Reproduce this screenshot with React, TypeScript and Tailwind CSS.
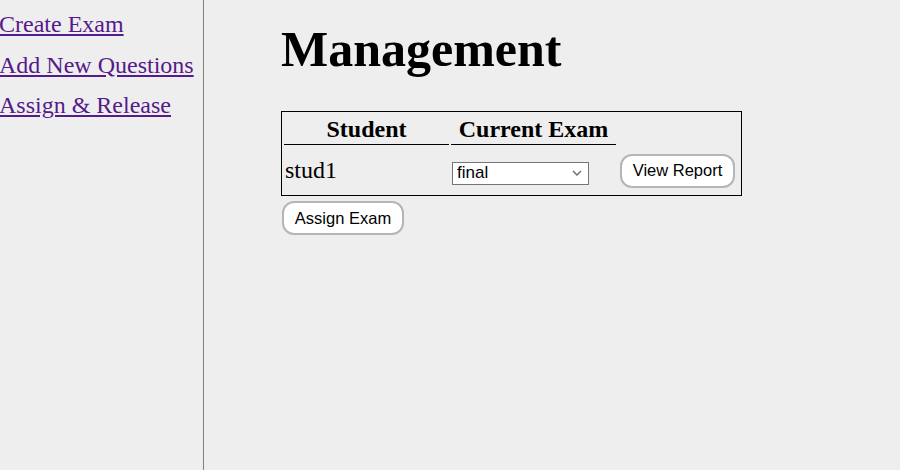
import React from "react";

export default function App() {
  const serif = { fontFamily: '"Liberation Serif", "Times New Roman", serif' };
  const sans = { fontFamily: '"Liberation Sans", Arial, sans-serif' };
  return (
    <div className="flex h-[470px] w-[900px] bg-[#eeeeee] text-black overflow-hidden" style={serif}>
      <nav className="w-[204px] h-full border-r border-[#808080] flex flex-col pt-[4px] text-[24px] leading-[40.5px] shrink-0">
        <a href="#" className="text-[#551a8b] underline block -ml-[1px]">Create Exam</a>
        <a href="#" className="text-[#551a8b] underline block -ml-[1px]">Add New Questions</a>
        <a href="#" className="text-[#551a8b] underline block -ml-[1px]">Assign &amp; Release</a>
      </nav>
      <main className="pl-[77px] flex flex-col items-start">
        <h1 className="text-[50px] font-bold leading-[55px] mt-[22px] mb-[34px]">Management</h1>
        <table className="border border-black border-separate border-spacing-[2px] text-[24px]">
          <thead>
            <tr>
              <th className="w-[165px] p-[1px] border-b border-black font-bold text-center leading-[28px]">Student</th>
              <th className="w-[165px] p-[1px] border-b border-black font-bold text-center leading-[28px]">Current Exam</th>
              <th className="w-[121px] p-[1px]"></th>
            </tr>
          </thead>
          <tbody>
            <tr>
              <td className="h-[46px] p-[1px] text-left align-middle leading-[27px]">stud1</td>
              <td className="h-[46px] p-[1px] align-middle">
                <div className="mt-[6px] w-[137px] h-[23px] border border-[#767676] bg-white flex items-center justify-between pl-[4px] pr-[6px] text-[17px]" style={sans}>
                  <span>final</span>
                  <svg width="10" height="6" viewBox="0 0 10 6" fill="none">
                    <path d="M1 1l4 4 4-4" stroke="#6b6b6b" strokeWidth="1.4" />
                  </svg>
                </div>
              </td>
              <td className="h-[46px] p-[1px] align-middle">
                <button className="block mt-[1px] ml-[1px] w-[115px] h-[34px] rounded-[12px] border-2 border-[#b5b5b5] bg-white text-[16.5px] text-black" style={sans}>
                  View Report
                </button>
              </td>
            </tr>
          </tbody>
        </table>
        <button className="mt-[5px] ml-[1px] w-[122px] h-[34px] rounded-[12px] border-2 border-[#b5b5b5] bg-white text-[16.5px] text-black" style={sans}>
          Assign Exam
        </button>
      </main>
    </div>
  );
}
